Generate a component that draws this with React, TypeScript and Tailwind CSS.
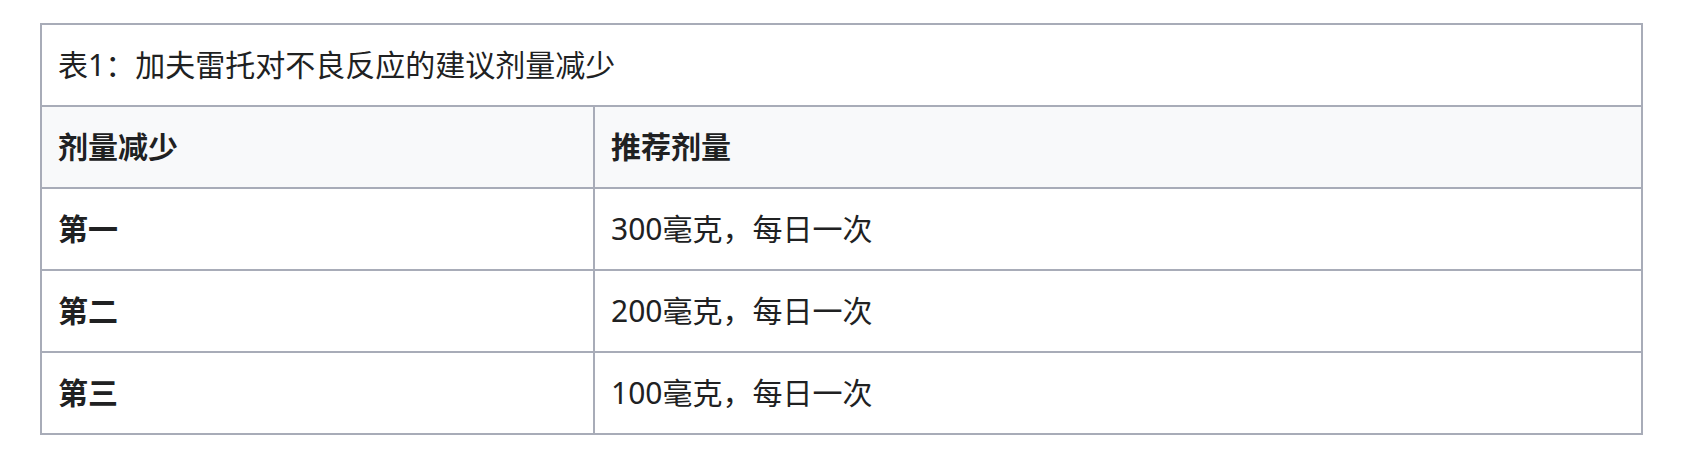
import React from "react";

const rows = [
  ["第一", "300毫克，每日一次"],
  ["第二", "200毫克，每日一次"],
  ["第三", "100毫克，每日一次"],
];

export default function App() {
  return (
    <div
      className="w-[1683px] h-[476px] bg-white pt-[23px] pl-[40px] text-[#202122]"
      style={{ fontFamily: '"Noto Sans", "Noto Sans CJK SC", sans-serif' }}
    >
      <table className="w-[1603px] border-collapse border-2 border-[#a8acb8] text-[30px] leading-[48px]">
        <tbody>
          <tr>
            <td colSpan={2} className="border-2 border-[#a8acb8] px-4 py-4 font-normal">
              表1：加夫雷托对不良反应的建议剂量减少
            </td>
          </tr>
          <tr className="bg-[#f8f9fa]">
            <th className="w-[553px] border-2 border-[#a8acb8] px-4 py-4 text-left font-bold">剂量减少</th>
            <th className="border-2 border-[#a8acb8] px-4 py-4 text-left font-bold">推荐剂量</th>
          </tr>
          {rows.map(([a, b]) => (
            <tr key={a}>
              <th className="border-2 border-[#a8acb8] px-4 py-4 text-left font-bold">{a}</th>
              <td className="border-2 border-[#a8acb8] px-4 py-4">{b}</td>
            </tr>
          ))}
        </tbody>
      </table>
    </div>
  );
}
